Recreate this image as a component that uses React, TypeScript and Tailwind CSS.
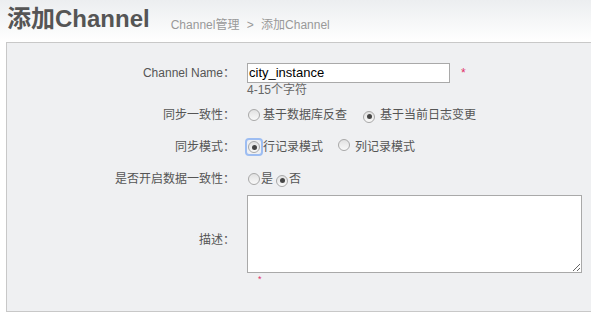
import React from "react";

const FONT = { fontFamily: '"Liberation Sans", Arial, "Noto Sans CJK SC", sans-serif' };

function Radio({ checked, focus }: { checked?: boolean; focus?: boolean }) {
  return (
    <span
      className={`inline-flex h-[14px] w-[14px] shrink-0 items-center justify-center ${
        focus ? "rounded-[2px] outline-2 outline-offset-0 outline-[#9dbdf2] outline" : ""
      }`}
    >
      <span className="flex h-[12px] w-[12px] items-center justify-center rounded-full border border-[#a8a8a8] bg-gradient-to-b from-[#e2e2e2] to-[#f9f9f9]">
        {checked && <span className="h-[5px] w-[5px] rounded-full bg-[#454545]" />}
      </span>
    </span>
  );
}

function Row({
  label,
  children,
  className = "",
}: {
  label?: string;
  children: React.ReactNode;
  className?: string;
}) {
  return (
    <div className={`flex items-center ${className}`}>
      <div className="w-[228px] shrink-0 text-right text-[12px] text-[#555]">{label}</div>
      <div className="ml-[12px] flex items-center">{children}</div>
    </div>
  );
}

export default function App() {
  return (
    <div className="h-[321px] w-[591px] overflow-hidden bg-white" style={FONT}>
      <div className="flex h-[42px] items-end gap-[21px] bg-gradient-to-b from-[#eceef0] to-white pb-[9px] pl-[7px]">
        <h1 className="text-[24px] font-bold leading-[28px] text-[#555]">添加Channel</h1>
        <div className="pb-[1px] text-[12px] leading-[14px] text-[#999]">
          Channel管理 <span className="mx-[4px]">&gt;</span> 添加Channel
        </div>
      </div>
      <div className="ml-[6px] h-[270px] border-y border-l border-[#c8c8c8] bg-[#eff0f2] pt-[20px] text-[12px] text-[#555]">
        <Row label="Channel Name：" className="h-[20px]">
          <div className="flex h-[20px] w-[203px] items-center border border-[#a9a9a9] bg-white pl-[1px] text-[13px] text-black">
            city_instance
          </div>
          <span className="ml-[11px] text-[12px] text-[#e0306a]">*</span>
        </Row>

        <Row className="h-[14px]">
          <span className="leading-[14px] text-[#666]">4-15个字符</span>
        </Row>

        <Row label="同步一致性：" className="mt-[10px] h-[16px]">
          <Radio />
          <span className="ml-[2px]">基于数据库反查</span>
          <span className="ml-[15px]"><Radio checked /></span>
          <span className="ml-[4px]">基于当前日志变更</span>
        </Row>

        <Row label="同步模式：" className="mt-[16px] h-[16px]">
          <Radio checked focus />
          <span className="ml-[2px]">行记录模式</span>
          <span className="ml-[14px]"><Radio /></span>
          <span className="ml-[4px]">列记录模式</span>
        </Row>

        <Row label="是否开启数据一致性：" className="mt-[16px] h-[16px]">
          <Radio />
          <span className="ml-0">是</span>
          <span className="ml-[2px]"><Radio checked /></span>
          <span className="ml-0">否</span>
        </Row>

        <div className="mt-[8px] flex">
          <div className="flex h-[78px] w-[228px] shrink-0 items-center justify-end pt-[12px] text-[12px] text-[#555]">
            描述：
          </div>
          <div className="ml-[12px]">
            <textarea
              className="block h-[78px] w-[335px] resize border border-[#a9a9a9] bg-white outline-none"
              readOnly
            />
            <div className="ml-[11px] mt-[1px] text-[9px] leading-[10px] text-[#e0306a]">*</div>
          </div>
        </div>
      </div>
    </div>
  );
}
